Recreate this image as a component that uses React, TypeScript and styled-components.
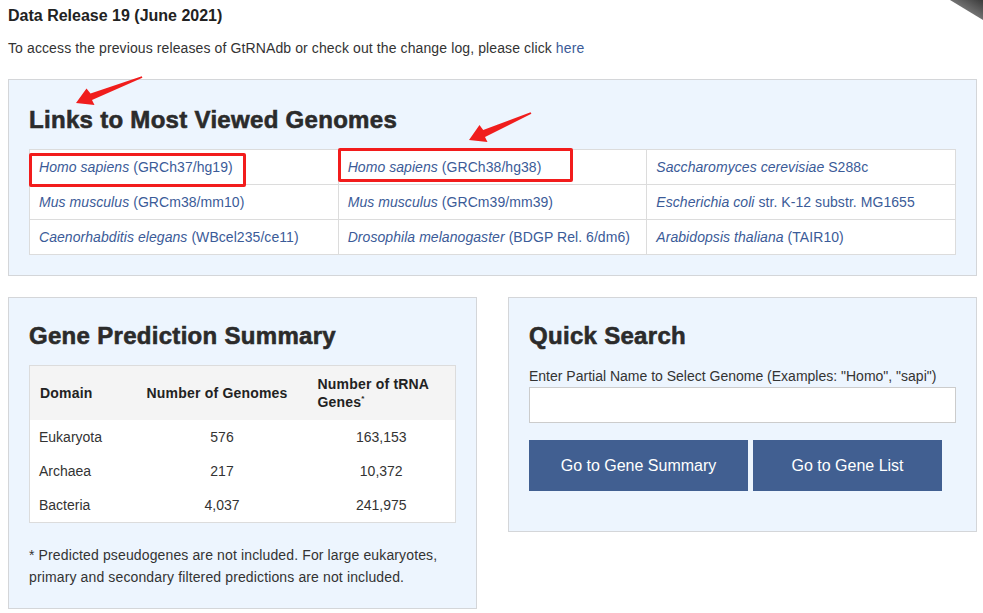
import styled, { createGlobalStyle } from 'styled-components';

const GlobalStyle = createGlobalStyle`
	body {
		margin: 0;
		background: #fff;
		font-family: "Liberation Sans", Arial, sans-serif;
		color: #333;
	}
`;

type Genome = { name: string; build: string };

const genomes: Genome[][] = [
	[
		{ name: 'Homo sapiens', build: '(GRCh37/hg19)' },
		{ name: 'Homo sapiens', build: '(GRCh38/hg38)' },
		{ name: 'Saccharomyces cerevisiae', build: 'S288c' },
	],
	[
		{ name: 'Mus musculus', build: '(GRCm38/mm10)' },
		{ name: 'Mus musculus', build: '(GRCm39/mm39)' },
		{ name: 'Escherichia coli', build: 'str. K-12 substr. MG1655' },
	],
	[
		{ name: 'Caenorhabditis elegans', build: '(WBcel235/ce11)' },
		{ name: 'Drosophila melanogaster', build: '(BDGP Rel. 6/dm6)' },
		{ name: 'Arabidopsis thaliana', build: '(TAIR10)' },
	],
];

const summary = [
	{ domain: 'Eukaryota', genomes: '576', genes: '163,153' },
	{ domain: 'Archaea', genomes: '217', genes: '10,372' },
	{ domain: 'Bacteria', genomes: '4,037', genes: '241,975' },
];

const Page = styled.div`
	position: relative;
	width: 969px;
	padding: 0 8px 10px;
`;

const ReleaseTitle = styled.h4`
	margin: 0;
	padding-top: 6px;
	font-size: 16px;
	line-height: 20px;
	font-weight: bold;
	color: #222;
`;

const Intro = styled.p`
	margin: 12px 0 0;
	font-size: 14px;
	line-height: 20px;
	letter-spacing: 0.11px;
`;

const Link = styled.a`
	color: #3b5b98;
	text-decoration: none;
	cursor: pointer;
`;

const Panel = styled.section<{ $top?: number; $bottom?: number }>`
	position: relative;
	box-sizing: border-box;
	background: #edf5fe;
	border: 1px solid #d4d6d9;
	padding: ${(p) => p.$top ?? 24}px 20px ${(p) => p.$bottom ?? 20}px;
	align-self: start;
`;

const PanelTitle = styled.h2`
	margin: 0;
	font-size: 24px;
	line-height: 28px;
	font-weight: bold;
	color: #2b2b2b;
	-webkit-text-stroke: 0.6px #2b2b2b;
	letter-spacing: 0.3px;
`;

const TopPanel = styled(Panel)`
	margin-top: 21px;
`;

const GenomeTable = styled.table`
	width: 100%;
	margin-top: 15px;
	border-collapse: collapse;
	table-layout: fixed;
	background: #fff;
	font-size: 14px;
	letter-spacing: 0.06px;

	td {
		border: 1px solid #dcdcdc;
		height: 34px;
		padding: 0 9px;
		white-space: nowrap;
	}
`;

const Columns = styled.div`
	display: grid;
	grid-template-columns: 469px 469px;
	column-gap: 31px;
	margin-top: 21px;
`;

const SummaryTable = styled.table`
	width: 100%;
	margin-top: 15px;
	border-collapse: collapse;
	table-layout: fixed;
	background: #fff;
	border: 1px solid #dcdcdc;
	font-size: 14px;
	color: #333;

	th {
		background: #f4f4f4;
		height: 54px;
		padding: 0 10px;
		text-align: left;
		font-weight: bold;
		line-height: 18px;
		color: #222;
		letter-spacing: 0.2px;
	}
	td {
		height: 34px;
		padding: 0 9px;
	}
	sup {
		font-size: 8px;
		line-height: 0;
	}
`;

const NumCell = styled.td`
	text-align: center;
`;

const Footnote = styled.p`
	margin: 21px 0 0;
	font-size: 14px;
	line-height: 22px;
	letter-spacing: 0.13px;
`;

const FieldLabel = styled.label`
	display: block;
	margin-top: 16px;
	font-size: 14px;
	line-height: 20px;
`;

const SearchInput = styled.input`
	display: block;
	box-sizing: border-box;
	width: 100%;
	height: 36px;
	margin-top: 1px;
	border: 1px solid #ccc;
	background: #fff;
	font: inherit;
`;

const ButtonRow = styled.div`
	display: flex;
	gap: 5px;
	margin-top: 17px;
`;

const Button = styled.button<{ $width: number }>`
	width: ${(p) => p.$width}px;
	height: 51px;
	border: none;
	background: #415f91;
	color: #fff;
	font-family: "Liberation Sans", Arial, sans-serif;
	font-size: 16px;
	cursor: pointer;
`;

const Highlight = styled.div<{ $left: number; $top: number; $width: number }>`
	position: absolute;
	left: ${(p) => p.$left}px;
	top: ${(p) => p.$top}px;
	width: ${(p) => p.$width}px;
	height: 34px;
	box-sizing: border-box;
	border: 3px solid #f21c1c;
	border-radius: 2px;
	pointer-events: none;
`;

const Overlay = styled.svg`
	position: absolute;
	left: 0;
	top: 0;
	pointer-events: none;
`;

function GenomeCell({ genome }: { genome: Genome }) {
	return (
		<td>
			<Link>
				<i>{genome.name}</i> {genome.build}
			</Link>
		</td>
	);
}

export default function App() {
	return (
		<>
			<GlobalStyle />
			<Page>
				<ReleaseTitle>Data Release 19 (June 2021)</ReleaseTitle>
				<Intro>
					To access the previous releases of GtRNAdb or check out the change
					log, please click <Link>here</Link>
				</Intro>

				<TopPanel $top={26}>
					<PanelTitle>Links to Most Viewed Genomes</PanelTitle>
					<GenomeTable>
						<tbody>
							{genomes.map((row, i) => (
								<tr key={i}>
									{row.map((g, j) => (
										<GenomeCell key={j} genome={g} />
									))}
								</tr>
							))}
						</tbody>
					</GenomeTable>
					<Highlight $left={20} $top={73} $width={217} />
					<Highlight $left={329} $top={68} $width={235} />
				</TopPanel>

				<Columns>
					<Panel>
						<PanelTitle>Gene Prediction Summary</PanelTitle>
						<SummaryTable>
							<colgroup>
								<col style={{ width: 107 }} />
								<col style={{ width: 171 }} />
								<col />
							</colgroup>
							<thead>
								<tr>
									<th>Domain</th>
									<th>Number of Genomes</th>
									<th>
										Number of tRNA Genes<sup>*</sup>
									</th>
								</tr>
							</thead>
							<tbody>
								{summary.map((s) => (
									<tr key={s.domain}>
										<td>{s.domain}</td>
										<NumCell>{s.genomes}</NumCell>
										<NumCell>{s.genes}</NumCell>
									</tr>
								))}
							</tbody>
						</SummaryTable>
						<Footnote>
							* Predicted pseudogenes are not included. For large eukaryotes,
							primary and secondary filtered predictions are not included.
						</Footnote>
					</Panel>

					<Panel $bottom={40}>
						<PanelTitle>Quick Search</PanelTitle>
						<FieldLabel>
							Enter Partial Name to Select Genome (Examples: "Homo", "sapi")
						</FieldLabel>
						<SearchInput type="text" />
						<ButtonRow>
							<Button $width={219}>Go to Gene Summary</Button>
							<Button $width={189}>Go to Gene List</Button>
						</ButtonRow>
					</Panel>
				</Columns>

				{/* annotation arrows + page corner shading */}
				<Overlay width={983} height={160} viewBox="0 0 983 160">
					<defs>
						<linearGradient id="corner" x1="0" y1="1" x2="1" y2="0">
							<stop offset="0" stopColor="#fff" stopOpacity="0" />
							<stop offset="0.45" stopColor="#777" />
							<stop offset="1" stopColor="#3a3a3a" />
						</linearGradient>
					</defs>
					<polygon points="950,0 983,0 983,20" fill="url(#corner)" />
					<polygon
						fill="#f01d1d"
						points="141.8,76.3 90.5,93.5 86.5,88.5 76,103 94.5,105 92,100 142.4,77.7"
					/>
					<polygon
						fill="#f01d1d"
						points="530.6,112.3 483.2,130 479.5,125 469,140 487.5,142 485,137 531.4,113.7"
					/>
				</Overlay>
			</Page>
		</>
	);
}
